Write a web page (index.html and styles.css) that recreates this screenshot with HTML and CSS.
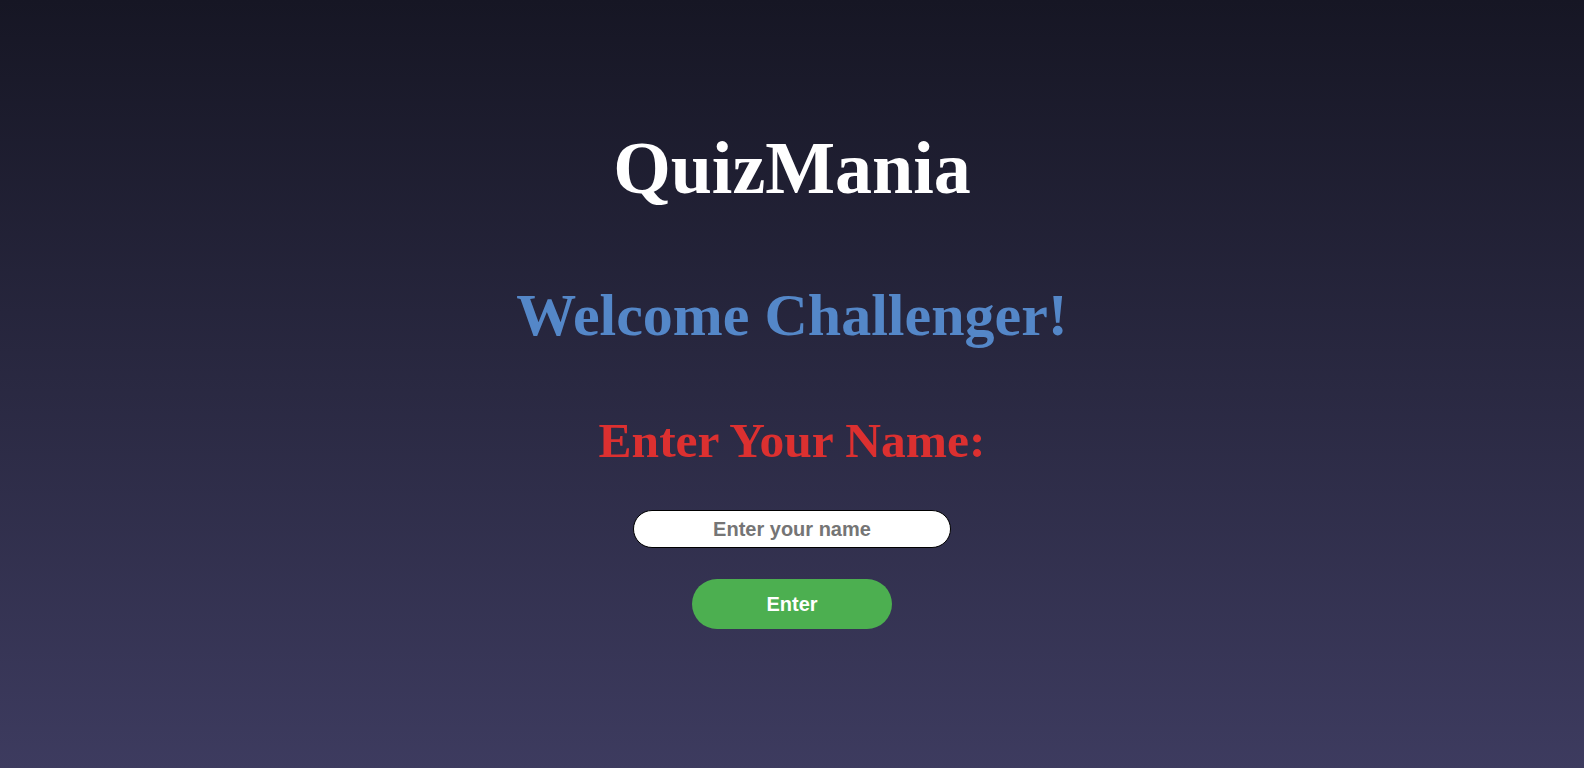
FILE: index.html
```html
<!DOCTYPE html>
<html lang="en">
<head>
<meta charset="utf-8">
<title>QuizMania</title>
<link rel="stylesheet" href="styles.css">
</head>
<body>
<main class="start">
  <h1 class="title">QuizMania</h1>
  <h2 class="welcome">Welcome Challenger!</h2>
  <h3 class="prompt">Enter Your Name:</h3>
  <input class="name-input" type="text" placeholder="Enter your name">
  <button class="enter-btn" type="button">Enter</button>
</main>
</body>
</html>
```

FILE: styles.css
```css
html, body {
  margin: 0;
  padding: 0;
  height: 100%;
}

body {
  background: linear-gradient(to bottom, #161624 0%, #3d3b5f 100%);
  font-family: "Liberation Serif", "Times New Roman", serif;
  min-height: 100vh;
}

.start {
  display: flex;
  flex-direction: column;
  align-items: center;
  padding-top: 126px;
}

.title {
  margin: 0;
  font-size: 74px;
  line-height: normal;
  font-weight: bold;
  color: #ffffff;
}

.welcome {
  margin: 70px 0 0;
  font-size: 60px;
  line-height: normal;
  font-weight: bold;
  color: #5487c8;
}

.prompt {
  margin: 62px 0 0;
  font-size: 49.5px;
  line-height: normal;
  font-weight: bold;
  color: #dc3030;
}

.name-input {
  margin-top: 41px;
  box-sizing: border-box;
  width: 318px;
  height: 38px;
  border: 1px solid #000;
  border-radius: 19px;
  background: #fff;
  font-family: "Liberation Sans", Arial, sans-serif;
  font-size: 20px;
  font-weight: bold;
  text-align: center;
  color: #333;
  outline: none;
  padding: 0 12px;
}

.name-input::placeholder {
  color: #757575;
  font-weight: bold;
}

.enter-btn {
  margin-top: 31px;
  width: 200px;
  height: 50px;
  border: none;
  border-radius: 25px;
  background: #4caf50;
  color: #fff;
  font-family: "Liberation Sans", Arial, sans-serif;
  font-size: 20px;
  font-weight: bold;
  cursor: pointer;
}
```
